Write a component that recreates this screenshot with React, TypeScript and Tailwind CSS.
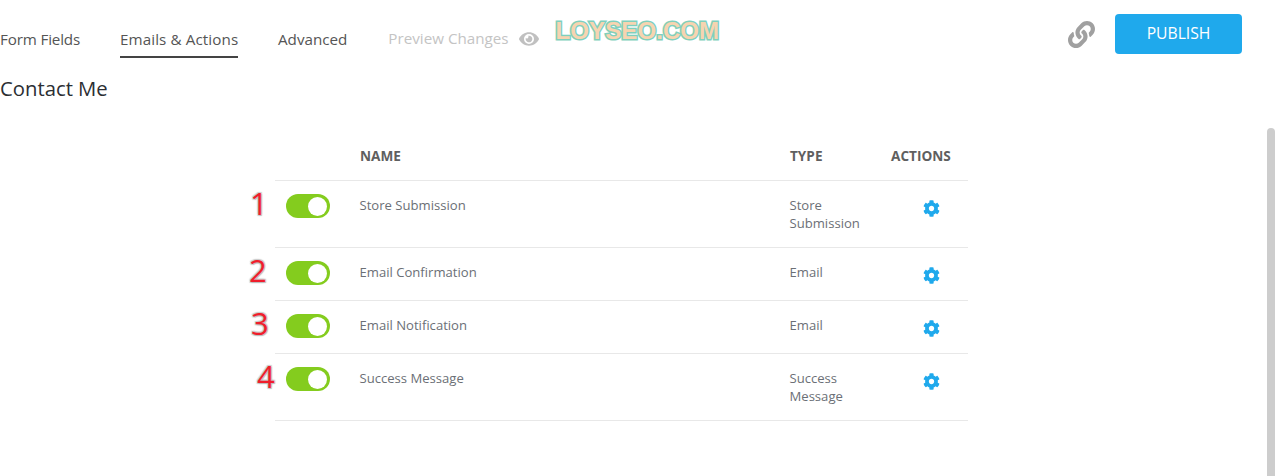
import { FC } from 'react'
import { FaCog, FaEye, FaLink } from 'react-icons/fa'

interface RowProps {
	mark: string
	markClass: string
	name: string
	type: string[]
	rowClass: string
}

const rows: RowProps[] = [
	{ mark: '1', markClass: 'left-[-25px]', name: 'Store Submission', type: ['Store', 'Submission'], rowClass: 'h-[67px]' },
	{ mark: '2', markClass: 'left-[-26px]', name: 'Email Confirmation', type: ['Email'], rowClass: 'h-[53px]' },
	{ mark: '3', markClass: 'left-[-24px]', name: 'Email Notification', type: ['Email'], rowClass: 'h-[53px]' },
	{ mark: '4', markClass: 'left-[-18px]', name: 'Success Message', type: ['Success', 'Message'], rowClass: 'h-[67px]' },
]

const Row: FC<RowProps> = ({ mark, markClass, name, type, rowClass }) => {
	return (
		<div className={`relative flex border-b border-[#e8e8e8] ${rowClass}`}>
			<span
				className={`absolute top-[2px] text-[31px] leading-[40px] text-[#f01e2c] [text-shadow:1px_1px_1px_#bbb,-1px_-1px_1px_#ccc,1px_-1px_1px_#ccc,-1px_1px_1px_#ccc] ${markClass}`}
			>
				{mark}
			</span>
			<div className="w-[85px] pl-[11px] pt-[13px]">
				<div className="flex h-6 w-11 items-center justify-end rounded-full bg-[#84cc1e] pr-[3px]">
					<div className="h-[19px] w-[19px] rounded-full bg-white" />
				</div>
			</div>
			<div className="w-[430px] -translate-x-[0.5px] pt-[15px] text-[13.1px] leading-[18px] text-[#6b6f76]">{name}</div>
			<div className="w-[101px] -translate-x-[0.5px] pt-[15px] text-[13.1px] leading-[18px] text-[#6b6f76]">
				{type.map((t) => (
					<div key={t}>{t}</div>
				))}
			</div>
			<div className="flex-1 pl-[32px] pt-[19px] text-[#1fa9ec]">
				<FaCog className="h-[17px] w-[17px]" />
			</div>
		</div>
	)
}

export default function App() {
	return (
		<div className="relative h-[476px] w-[1275px] overflow-hidden bg-white font-['Open_Sans',sans-serif]">
			<div className="flex h-[72px] pt-[14px]">
				<nav className="flex h-[44px] gap-[40px] text-[15.2px] leading-[50px] text-[#555]">
					<a className="h-[44px] w-[80px] whitespace-nowrap tracking-[-0.15px]">Form Fields</a>
					<a className="h-[44px] w-[118px] whitespace-nowrap border-b-2 border-[#444] tracking-[0.1px]">Emails &amp; Actions</a>
					<a className="h-[44px]">Advanced</a>
					<a className="flex h-[44px] items-center gap-[10px] pl-[1px] pt-[6px] leading-none text-[#c4c4c4]">
						Preview Changes
						<FaEye className="h-[20px] w-[20px] text-[#c0c0c0]" />
					</a>
				</nav>
				<div className="ml-[17px] pt-[3px] font-['Liberation_Sans',sans-serif] text-[24px] leading-[28px] font-bold tracking-[0.1px] text-[#f7d4b0] [paint-order:stroke_fill] [-webkit-text-stroke:3px_#7fd0bd]">
					LOYSEO.COM
				</div>
				<div className="ml-auto mr-[33px] flex h-10 items-center gap-[20px]">
					<FaLink className="h-[27px] w-[27px] text-[#a0a0a0]" />
					<button className="h-10 w-[127px] rounded-[4px] bg-[#1fa9ec] text-[15.7px] text-white">PUBLISH</button>
				</div>
			</div>
			<h1 className="text-[20.3px] leading-[32px] font-normal text-[#2b2e33]">Contact Me</h1>
			<div className="mx-[275px] mt-[43px] w-[693px]">
				<div className="flex h-[34px] border-b border-[#e8e8e8] text-[13.6px] leading-[18px] font-bold text-[#5f5f5f]">
					<div className="w-[85px]" />
					<div className="w-[430px]">NAME</div>
					<div className="w-[101px]">TYPE</div>
					<div className="flex-1">ACTIONS</div>
				</div>
				{rows.map((row) => (
					<Row key={row.mark} {...row} />
				))}
			</div>
			<div className="absolute right-0 top-[128px] bottom-0 w-2 rounded-t-full bg-[#cdcdcd]" />
		</div>
	)
}
